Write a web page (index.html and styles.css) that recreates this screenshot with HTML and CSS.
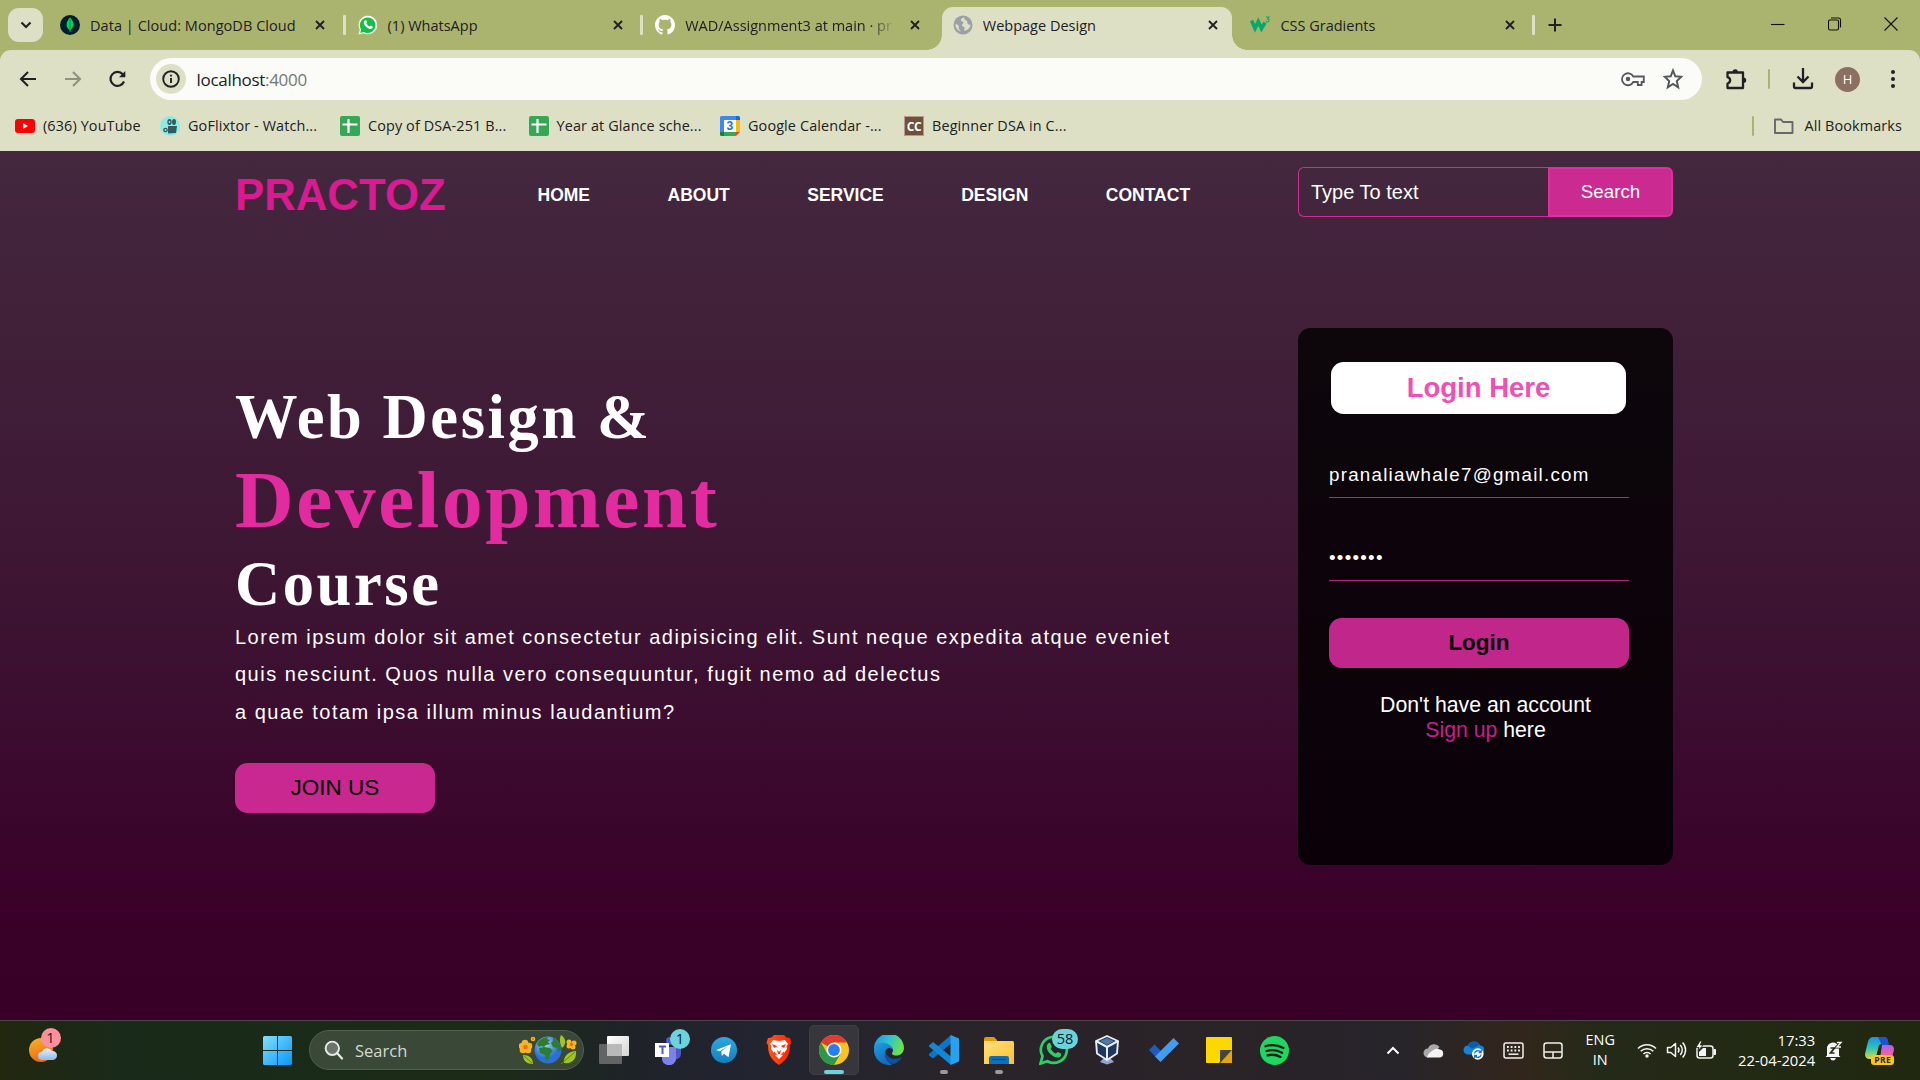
FILE: index.html
```html
<!DOCTYPE html>
<html lang="en">
<head>
<meta charset="utf-8">
<title>Webpage Design</title>
<link rel="stylesheet" href="styles.css">
</head>
<body>
<svg class="defs" width="0" height="0" aria-hidden="true">
  <defs>
    <symbol id="close" viewBox="0 0 10 10"><path d="M1 1l8 8M9 1l-8 8" stroke="#202124" stroke-width="1.9" fill="none"/></symbol>
    <symbol id="sheet" viewBox="0 0 20 20"><rect width="20" height="20" rx="2" fill="#34a853"/><path d="M8.5 3v14M2.5 8.5h15" stroke="#fff" stroke-width="2.2"/></symbol>
    <linearGradient id="winG" x1="0" y1="0" x2="1" y2="1"><stop offset="0" stop-color="#7fe0ff"/><stop offset="1" stop-color="#0a96f5"/></linearGradient>
    <linearGradient id="sunG" x1="0" y1="0" x2=".4" y2="1"><stop offset="0" stop-color="#f8b62c"/><stop offset="1" stop-color="#ee6a12"/></linearGradient>
    <linearGradient id="cloudG" x1="0" y1="0" x2="0" y2="1"><stop offset="0" stop-color="#e8f3ff"/><stop offset="1" stop-color="#8fb9ea"/></linearGradient>
    <linearGradient id="tgG" x1="0" y1="0" x2="0" y2="1"><stop offset="0" stop-color="#2fa8e2"/><stop offset="1" stop-color="#1180be"/></linearGradient>
    <linearGradient id="brG" x1="0" y1="0" x2="1" y2="0"><stop offset="0" stop-color="#ff5a1e"/><stop offset="1" stop-color="#ff1f00"/></linearGradient>
    <linearGradient id="edG" x1="0" y1="0" x2="1" y2=".3"><stop offset="0" stop-color="#1b8fd8"/><stop offset=".5" stop-color="#2bc0dc"/><stop offset="1" stop-color="#6be04e"/></linearGradient>
    <linearGradient id="edB" x1="0" y1="0" x2=".5" y2="1"><stop offset="0" stop-color="#1f9de6"/><stop offset="1" stop-color="#1668b8"/></linearGradient>
    <linearGradient id="foG" x1="0" y1="0" x2="1" y2="1"><stop offset="0" stop-color="#ffdf80"/><stop offset="1" stop-color="#ffc02c"/></linearGradient>
    <linearGradient id="cpA" x1="0" y1="0" x2="0" y2="1"><stop offset="0" stop-color="#1c8fe8"/><stop offset=".5" stop-color="#2fc5b4"/><stop offset="1" stop-color="#e7d43a"/></linearGradient>
    <linearGradient id="cpB" x1="0" y1="0" x2="0" y2="1"><stop offset="0" stop-color="#b25cf0"/><stop offset=".5" stop-color="#f2619c"/><stop offset="1" stop-color="#fb8a3c"/></linearGradient>
    <linearGradient id="tvG" x1="0" y1="0" x2="1" y2="1"><stop offset="0" stop-color="#fff"/><stop offset="1" stop-color="#d4d4d4"/></linearGradient>
    <radialGradient id="earthG" cx=".4" cy=".3"><stop offset="0" stop-color="#9fd6ff"/><stop offset="1" stop-color="#2b6fd8"/></radialGradient>
  </defs>
</svg>

<header class="tabstrip">
  <button class="tab-search"><svg width="12" height="8" viewBox="0 0 12 8"><path d="M1.5 1.5L6 6l4.500-4.500" fill="none" stroke="#202124" stroke-width="2.100"/></svg></button>
  <div class="tab">
    <svg class="fav" viewBox="0 0 20 20"><circle cx="10" cy="10" r="10" fill="#001e2b"/><path d="M10 2.500c2.800 3 3.600 5.200 3.400 7.600-.2 2.400-1.500 3.700-2.900 5L10 17.500l-.5-2.400c-1.500-1.200-2.800-2.700-2.900-5-.1-2.500.8-4.700 3.400-7.600z" fill="#00d65b"/><path d="M10 4v13" stroke="#00894a" stroke-width=".8"/></svg>
    <span class="tab-title t1">Data | Cloud: MongoDB Cloud</span>
    <svg class="x"><use href="#close"/></svg>
  </div>
  <div class="tab sep">
    <svg class="fav" viewBox="0 0 20 20"><path d="M.5 19.500L1.800 14.600A9.300 9.300 0 1 1 5.500 18.200z" fill="#fff"/><path d="M2.200 17.900l.9-3.400a7.800 7.800 0 1 1 2.800 2.600z" fill="#12c143"/><path d="M7.200 5.300c.5-.3 1-.2 1.200.3l.7 1.500c.1.400-.7 1.100-.6 1.400.7 1.400 1.700 2.300 3 2.900.4.100 1-1 1.300-.9l1.700.8c.4.200.4 2-1 2.500-2.200.8-7.300-2.600-7.700-5.900-.1-1.200.6-2.200 1.400-2.600z" fill="#fff"/></svg>
    <span class="tab-title">(1) WhatsApp</span>
    <svg class="x"><use href="#close"/></svg>
  </div>
  <div class="tab sep">
    <svg class="fav" viewBox="0 0 16 16"><path fill="#fff" d="M8 0C3.580 0 0 3.580 0 8c0 3.540 2.290 6.530 5.470 7.590.4.070.55-.17.55-.38 0-.19-.01-.82-.01-1.490-2.010.37-2.530-.49-2.690-.94-.09-.23-.48-.94-.82-1.130-.28-.15-.68-.52-.01-.53.630-.01 1.080.58 1.230.82.72 1.210 1.870.87 2.330.66.070-.52.280-.87.510-1.070-1.780-.2-3.640-.89-3.640-3.950 0-.87.310-1.590.82-2.150-.08-.2-.36-1.020.08-2.120 0 0 .67-.21 2.200.82.640-.18 1.320-.27 2-.27s1.360.09 2 .27c1.530-1.040 2.200-.82 2.200-.82.440 1.100.160 1.920.08 2.120.51.560.82 1.270.82 2.150 0 3.070-1.870 3.750-3.650 3.950.290.250.540.730.540 1.480 0 1.070-.01 1.930-.01 2.200 0 .21.150.46.550.38A8.010 8.010 0 0 0 16 8c0-4.420-3.580-8-8-8z"/></svg>
    <span class="tab-title t3">WAD/Assignment3 at main · pr</span>
    <svg class="x"><use href="#close"/></svg>
  </div>
  <div class="tab active">
    <svg class="fav globe" viewBox="0 0 20 20"><circle cx="10" cy="10" r="9.500" fill="#9aa0a6"/><path d="M10.500 2.500c-2 .8-3 2.200-2.500 3.300.5 1 2.300.6 2.500 1.800.2 1.100-1.600 1.300-1.500 2.700.1 1.300 2 1 2.600 2.200.4 1-.7 1.700-.4 3.300 3.500-.5 6.300-3 6.300-6.300-1.200.3-2.400.1-3-.8-.6-1 .3-1.900-.4-2.800-.7-.8-2.200-.5-2.500-1.600-.2-.7.300-1.500-1.100-1.800zM2.500 9c1.500.3 3 1 3.300 2.300.2 1-.6 1.700.1 2.800.5.800 1.400.8 1.700 2.300C4.500 15.500 2.200 12.500 2.500 9z" fill="#dde0c5"/></svg>
    <span class="tab-title">Webpage Design</span>
    <svg class="x"><use href="#close"/></svg>
  </div>
  <div class="tab">
    <svg class="fav w3" viewBox="0 0 20 20"><path d="M1.500 5.500L5 13.500 8.300 6.500l3.200 7L15 7.500" fill="none" stroke="#04aa6d" stroke-width="3.600"/><path d="M16 2h3l-1.500 2c2 0 2 3-.2 3-.7 0-1.200-.3-1.500-.8" fill="none" stroke="#04aa6d" stroke-width="1.100"/></svg>
    <span class="tab-title">CSS Gradients</span>
    <svg class="x"><use href="#close"/></svg>
  </div>
  <div class="new-tab"><svg width="14" height="14" viewBox="0 0 14 14"><path d="M7 .5v13M.5 7h13" stroke="#202124" stroke-width="2"/></svg></div>
  <div class="window-controls">
    <svg width="14" height="14" viewBox="0 0 14 14"><path d="M0 7.500h13.500" stroke="#111" stroke-width="1.100"/></svg>
    <svg width="14" height="14" viewBox="0 0 14 14"><rect x=".5" y="3" width="10" height="10" rx="1.500" fill="none" stroke="#111" stroke-width="1.100"/><path d="M3 1h7.500a2 2 0 0 1 2 2v7.500" fill="none" stroke="#111" stroke-width="1.100"/></svg>
    <svg width="14" height="14" viewBox="0 0 14 14"><path d="M.5 .5l13 13M13.500 .5l-13 13" stroke="#111" stroke-width="1.100"/></svg>
  </div>
</header>

<div class="chrome">
  <div class="toolbar">
    <svg class="tool" viewBox="0 0 20 20"><path d="M18 10H3.500M10 3L3 10l7 7" fill="none" stroke="#202124" stroke-width="2.100"/></svg>
    <svg class="tool" viewBox="0 0 20 20"><path d="M2 10h14.500M10 3l7 7-7 7" fill="none" stroke="#8f927f" stroke-width="2.100"/></svg>
    <svg class="tool" viewBox="0 0 20 20"><path d="M17 12.500A7 7 0 1 1 15.800 5.300L17.500 7.300" fill="none" stroke="#202124" stroke-width="2.200"/><path d="M18.300 2v6.300h-6.300z" fill="#202124"/></svg>
    <div class="omnibox">
      <span class="info"><svg width="20" height="20" viewBox="0 0 20 20"><circle cx="10" cy="10" r="7.800" fill="none" stroke="#202124" stroke-width="1.900"/><path d="M10 9v5M10 5.700v1.900" stroke="#202124" stroke-width="1.900"/></svg></span>
      <span class="url">localhost<span class="port">:4000</span></span>
      <svg class="key" width="24" height="16" viewBox="0 0 24 16"><path d="M12.300 5.500h10.500v5.500h-2.200v3h-3.800v-3h-4.500A6 6 0 1 1 12.300 5.500z" fill="none" stroke="#55585a" stroke-width="1.800"/><circle cx="7" cy="8" r="2.200" fill="#55585a"/></svg>
      <svg class="star" width="20" height="22" viewBox="0 0 20 22"><path d="M10 2.500l2.300 5.800 6 .5-4.500 4.300 1.400 6.300L10 16l-5.200 3.400 1.400-6.300L1.700 8.800l6-.5z" fill="none" stroke="#55585a" stroke-width="2"/></svg>
    </div>
    <svg class="puzzle" width="22" height="22" viewBox="0 0 22 22"><path d="M2.500 4.500h15.500v15.500H2.500v-4.500c3.500-.8 3.500-5.500 0-6.300z" fill="none" stroke="#202124" stroke-width="2.300" stroke-linejoin="round"/><path d="M7.500 4a2.700 2.700 0 0 1 5.400 0zM18.500 9.500a2.700 2.700 0 0 1 0 5.400z" fill="#202124"/></svg>
    <i class="vsep"></i>
    <svg class="dl" width="22" height="22" viewBox="0 0 22 22"><path d="M11 0v13.500M5.500 8.500l5.500 5.500 5.500-5.500M2 14.500v4q0 1.500 1.500 1.500h15q1.500 0 1.500-1.500v-4" fill="none" stroke="#202124" stroke-width="2.300"/></svg>
    <span class="avatar">H</span>
    <svg class="dots" width="6" height="20" viewBox="0 0 6 20"><g fill="#202124"><circle cx="3" cy="3" r="2"/><circle cx="3" cy="10" r="2"/><circle cx="3" cy="17" r="2"/></g></svg>
  </div>
  <div class="bookmarks">
    <div class="bm b1"><svg viewBox="0 0 20 20"><rect y="3" width="20" height="14" rx="3" fill="#f00"/><path d="M8 7v6l5-3z" fill="#fff"/></svg><span>(636) YouTube</span></div>
    <div class="bm b2"><svg viewBox="0 0 20 20"><circle cx="10" cy="10" r="10" fill="#93e8e2"/><g fill="#2e5d5e"><ellipse cx="9.500" cy="6" rx="2.200" ry="3"/><ellipse cx="14" cy="6" rx="2" ry="3"/><path d="M8 10h9l-1 7-8 .5z"/><circle cx="5.500" cy="14" r="2.300"/></g><circle cx="9.500" cy="6" r=".9" fill="#93e8e2"/><circle cx="5.500" cy="14" r="1" fill="#93e8e2"/></svg><span>GoFlixtor - Watch...</span></div>
    <div class="bm b3"><svg><use href="#sheet"/></svg><span>Copy of DSA-251 B...</span></div>
    <div class="bm b4"><svg><use href="#sheet"/></svg><span>Year at Glance sche...</span></div>
    <div class="bm b5"><svg viewBox="0 0 20 20"><path d="M0 1.500Q0 0 1.500 0H16v4H4v12H0z" fill="#4285f4"/><path d="M16 0h2.500Q20 0 20 1.500V4h-4z" fill="#1967d2"/><path d="M16 4h4v12h-4z" fill="#fbbc04"/><path d="M4 16h12v4H4z" fill="#34a853"/><path d="M0 16h4v4H1.500Q0 20 0 18.500z" fill="#188038"/><path d="M16 16h4l-4 4z" fill="#ea4335"/><path d="M4 4h12v12H4z" fill="#fff"/><text x="10" y="14.200" text-anchor="middle" class="cal">3</text></svg><span>Google Calendar -...</span></div>
    <div class="bm b6"><svg viewBox="0 0 20 20"><rect width="20" height="20" fill="#6f513d"/><rect x=".5" y=".5" width="19" height="19" fill="none" stroke="#b99a86"/><text x="10" y="14.500" text-anchor="middle" class="cc">CC</text></svg><span>Beginner DSA in C...</span></div>
    <i class="vsep push"></i>
    <div class="bm all"><svg class="folder" width="22" height="18" viewBox="0 0 22 18"><path d="M2 2.500h6l2 2.500h9.500v11H2z" fill="none" stroke="#66696b" stroke-width="1.900" stroke-linejoin="round"/></svg><span>All Bookmarks</span></div>
  </div>
</div>

<main class="page">
  <nav class="navbar">
    <h2 class="logo">PRACTOZ</h2>
    <ul class="menu"><li>HOME</li><li>ABOUT</li><li>SERVICE</li><li>DESIGN</li><li>CONTACT</li></ul>
    <div class="search"><span class="field">Type To text</span><button>Search</button></div>
  </nav>
  <div class="content">
    <section class="intro">
      <h1><span class="l1">Web Design &amp;</span><span class="l2">Development</span><span class="l3">Course</span></h1>
      <p>Lorem ipsum dolor sit amet consectetur adipisicing elit. Sunt neque expedita atque eveniet<br>quis nesciunt. Quos nulla vero consequuntur, fugit nemo ad delectus<br>a quae totam ipsa illum minus laudantium?</p>
      <button class="join">JOIN US</button>
    </section>
    <section class="form">
      <h2>Login Here</h2>
      <div class="input email">pranaliawhale7@gmail.com</div>
      <div class="input password">•••••••</div>
      <button class="login">Login</button>
      <p>Don't have an account<br><a>Sign up</a> here</p>
    </section>
  </div>
</main>

<footer class="taskbar">
  <div class="weather">
    <svg width="30" height="32" viewBox="0 0 30 32"><circle cx="13" cy="16" r="12" fill="url(#sunG)"/><path d="M14 26a4 4 0 0 1 0-8 5.500 5.500 0 0 1 10-1 4.500 4.500 0 0 1 1 9z" fill="url(#cloudG)"/></svg>
    <span class="badge pink">1</span>
  </div>
  <svg class="start" width="29" height="29" viewBox="0 0 29 29"><path d="M0 1.500Q0 0 1.500 0H14v14H0zM15 0h12.500Q29 0 29 1.500V14H15zM0 15h14v14H1.500Q0 29 0 27.500zM15 15h14v12.500q0 1.500-1.500 1.500H15z" fill="url(#winG)"/></svg>
  <div class="tb-search">
    <svg width="20" height="20" viewBox="0 0 20 20"><circle cx="8.300" cy="8.300" r="6.700" fill="#6b746b" stroke="#e6eae6" stroke-width="1.900"/><path d="M13 13l5 5.500" stroke="#e6eae6" stroke-width="2.200" stroke-linecap="round"/></svg>
    <span>Search</span>
    <svg class="earth" width="58" height="30" viewBox="0 0 58 30">
      <g fill="#f7b51e"><circle cx="6" cy="8" r="3.300"/><circle cx="10" cy="11" r="3.300"/><circle cx="9" cy="15" r="3.300"/><circle cx="4" cy="15" r="3.300"/><circle cx="3" cy="11" r="3.300"/><circle cx="14" cy="4" r="2.300"/><circle cx="50" cy="7" r="2.500"/><circle cx="55" cy="8" r="2.500"/><circle cx="54" cy="12" r="2.500"/><circle cx="50" cy="11" r="2.500"/></g>
      <circle cx="6.500" cy="12" r="2.300" fill="#f06a1c"/><circle cx="52.500" cy="9.500" r="1.700" fill="#f06a1c"/><circle cx="14" cy="4" r="1" fill="#f06a1c"/>
      <path d="M4 20c6 0 10 3 10 9-6 0-10-3-10-9zM42 0c5 3 6 9 1 13-2-4-3-9-1-13zM57 16c1 8-4 13-12 12-1-7 5-12 12-12z" fill="#a3c51c"/><path d="M5 21l8 7M56 17L42 29" stroke="#5d8a12"/>
      <circle cx="29" cy="15" r="13.500" fill="url(#earthG)"/>
      <path d="M18 9c2-4 6-7 11-7l-1 2 3 1-2 2 2 2-4 1-2 2-3-1-2 1zM20 13l5-1 6 1 3 3-3 3-1 5-3 2-1-6-5-2zM34 3c4 2 7 6 8 11l-3 3-1-4-4-1-2-4 2-2z" fill="#2d7d2b"/>
    </svg>
  </div>
  <div class="apps">
    <div class="app"><svg width="30" height="28" viewBox="0 0 30 28"><rect x="8" width="22" height="20" rx="1" fill="url(#tvG)"/><rect y="8" width="23" height="20" rx="1" fill="#777" fill-opacity=".78"/><path d="M8 8h15v12H8z" fill="#b9b9b9"/></svg></div>
    <div class="app"><svg width="30" height="30" viewBox="0 0 30 30"><circle cx="16" cy="6" r="4" fill="#5059c9"/><path d="M19 12h8v7a5 5 0 0 1-8 4z" fill="#4f57c6"/><path d="M8 12h14v9a7 7 0 0 1-14 4z" fill="#7b83eb"/><rect x="1" y="8" width="14" height="14" fill="#fff"/><path d="M5 11.500h7M8.500 11.500V19" stroke="#5059c9" stroke-width="2"/></svg><span class="badge">1</span></div>
    <div class="app"><svg width="26" height="26" viewBox="0 0 26 26"><circle cx="13" cy="13" r="13" fill="url(#tgG)"/><path d="M5 13L20 7.200l-2.500 13-4.500-3.500-2.200 2.200-.5-4.400 6-5-7.500 4.700z" fill="#fff"/></svg></div>
    <div class="app"><svg width="26" height="30" viewBox="0 0 26 30"><path d="M8 0h10l2.500 2.500L24 3l1.500 5-1.500 2c0 8-2 14-11 20C4 24 2 18 2 10L.5 8 2 3l3.500-.5z" fill="url(#brG)"/><path d="M7 5l6 1 6-1 3 4-1.500 2 .5 3-3 4-5 2-5-2-3-4 .5-3L4 9z" fill="#fff"/><path d="M6 9l4 1.500 1 1-3 1.500zM20 9l-4 1.500-1 1 3 1.500zM11 15l2 1.500 2-1.500-1 4h-2zM8 16.500l3 2.500-3-.5zM18 16.500L15 19l3-.5z" fill="#ff3a10"/><path d="M9 20l4-1 4 1-4 4z" fill="#fff"/></svg></div>
    <div class="app on"><svg width="30" height="30" viewBox="0 0 30 30"><circle cx="15" cy="15" r="15" fill="#fcc31e"/><path d="M15 15L2 7.500A15 15 0 0 1 28 7.500H15z" fill="#e33b2e"/><path d="M2 7.500A15 15 0 0 0 15 30l6.500-11.300L15 15 8.500 18.700z" fill="#2a9a47"/><circle cx="15" cy="15" r="7.500" fill="#fff"/><circle cx="15" cy="15" r="5.900" fill="#2b7cf0"/></svg><i class="mark wide"></i></div>
    <div class="app"><svg width="30" height="30" viewBox="0 0 30 30"><path d="M0 14A15 15 0 0 1 30 13c0 5-4 7.500-7.500 7.500-3 0-5-1-4.500-2.500 2-2 1-5.500-2-6.500C11 9 4 9 0 14z" fill="url(#edG)"/><path d="M0 14C1 8 8 6.500 14 9c4 2 5 4 4.800 6.500C18 12 13 12 11.500 16c-1.500 5 1 10 6.500 13.700A15 15 0 0 1 0 14z" fill="url(#edB)"/><path d="M11.500 16C9 22 14 29 20 29c4-1.500 6.500-4 8-7-9 4.500-16 0-16.500-6z" fill="#0f4f9c"/></svg></div>
    <div class="app"><svg width="30" height="30" viewBox="0 0 30 30"><path d="M22 0v8.500L4 23.500 0 20.500v-1.500z" fill="#0a76c4"/><path d="M0 10.500L4 7l18 14.500V30L0 11.500z" fill="#1287d4"/><path d="M21.500 0L30 3.500v23L21.500 30z" fill="#25a3f0"/></svg><i class="mark"></i></div>
    <div class="app"><svg width="30" height="27" viewBox="0 0 30 27"><path d="M0 2q0-2 2-2h8l3 3v3H0z" fill="#e09a07"/><path d="M0 4h28.500Q30 4 30 5.500V27H0z" fill="url(#foG)"/><path d="M5 27v-6q0-2 2-2h16q2 0 2 2v6z" fill="#0f70bd"/><path d="M8 22.500h14" stroke="#0a4c86" stroke-width="1.300"/></svg><i class="mark"></i></div>
    <div class="app"><svg width="30" height="30" viewBox="0 0 30 30"><path d="M1.500 28.500l2-7.300a13 13 0 1 1 5 5z" fill="none" stroke="#25d366" stroke-width="2.700"/><path d="M9 8.500c1-1 2-.7 2.400.1l1.300 2.800c.2.900-1 1.800-1 2.300 1 2.300 3 4 5 4.800.8.100 1.500-1.600 2.200-1.500l3 1.400c.7.600-.2 3.400-1.800 3.900C16 23.800 8 18 7.700 12c0-1.500.6-2.800 1.300-3.500z" fill="#25d366"/></svg><span class="badge pill">58</span></div>
    <div class="app vbox"><svg width="26" height="30" viewBox="0 0 26 30"><path d="M9 24h8l3 3-7 2.500L6 27z" fill="#8fa6cf"/><path d="M13 1l11 5-1 12.500L13 25 3 18.500 2 6z" fill="#1d3760" stroke="#e9eef7" stroke-width="1.900" stroke-linejoin="round"/><path d="M2 6l11 6 11-6M13 12v13" stroke="#e9eef7" stroke-width="2" fill="none"/><path d="M13 3l7 3-7 4-7-4z" fill="#5277a5"/></svg></div>
    <div class="app"><svg width="30" height="24" viewBox="0 0 30 24"><path d="M0 12l5.500-5.500L17 18l-5.500 6z" fill="#1c5bc0"/><path d="M24.500 0L30 5.500 11.500 24 6 18.500z" fill="#3f9cf0"/></svg></div>
    <div class="app"><svg width="26" height="26" viewBox="0 0 26 26"><path d="M0 1q0-1 1-1h24q1 0 1 1v12L13 26H1q-1 0-1-1z" fill="#fdd700"/><path d="M14 13h12L14 26z" fill="#444"/><path d="M26 13v13H14z" fill="#e8a50a"/></svg></div>
    <div class="app"><svg width="29" height="29" viewBox="0 0 29 29"><circle cx="14.500" cy="14.500" r="14.500" fill="#1ed760"/><path d="M5.500 10.200c6-1.800 13-1 18 1.800M6.500 15c5-1.500 11-.8 15.500 1.700M7.500 19.400c4.500-1.200 9-.6 13 1.500" fill="none" stroke="#111c14" stroke-width="2.300" stroke-linecap="round"/></svg></div>
  </div>
  <div class="tray">
    <svg width="14" height="9" viewBox="0 0 14 9"><path d="M1.500 7.500L7 2l5.500 5.500" fill="none" stroke="#fff" stroke-width="2"/></svg>
    <svg width="21" height="15" viewBox="0 0 21 15"><path d="M5 14.500a4.500 4.500 0 0 1 0-9A6.500 6.500 0 0 1 16.500 4L12 9z" fill="#a8a8a8"/><path d="M4 14.500q0-4 8-8.500a6 6 0 0 1 5 .5 4.100 4.100 0 0 1 0 8z" fill="#f3f3f3"/></svg>
    <svg width="21" height="19" viewBox="0 0 21 19"><path d="M5 13.500a4.500 4.500 0 0 1 0-9A6.500 6.500 0 0 1 17 4.500a4.500 4.500 0 0 1 0 9z" fill="#1583dc"/><path d="M5 4.500A6.500 6.500 0 0 1 16.500 4L9 8z" fill="#0c5cab"/><circle cx="14.800" cy="13" r="5.800" fill="#fff"/><path d="M11.500 12.500a3.500 3.500 0 0 1 6.200-1.500M18.200 13.500a3.500 3.500 0 0 1-6.200 1.500M18.200 9v2.500h-2.500M11.500 17v-2.500h2.500" fill="none" stroke="#1a73c8" stroke-width="1.300"/></svg>
    <svg width="21" height="17" viewBox="0 0 21 17"><rect x="1" y="1" width="19" height="15" rx="2" fill="none" stroke="#f0f0f0" stroke-width="1.500"/><path d="M4 5h13M4 8.500h13" stroke="#f0f0f0" stroke-width="1.800" stroke-dasharray="1.800 1.900"/><path d="M5.500 12.200h10" stroke="#f0f0f0" stroke-width="1.500"/></svg>
    <svg width="20" height="17" viewBox="0 0 20 17"><rect x="1" y="1" width="18" height="15" rx="2.500" fill="none" stroke="#f0f0f0" stroke-width="1.500"/><path d="M1 10h18M10 10v6" stroke="#f0f0f0" stroke-width="1.500"/></svg>
    <div class="lang">ENG<br>IN</div>
    <svg width="20" height="16" viewBox="0 0 20 16"><g fill="none" stroke="#f4f4f4" stroke-width="1.600"><path d="M1 6.500a12.700 12.700 0 0 1 18 0M3.700 9.300a8.900 8.900 0 0 1 12.600 0M6.400 12a5.100 5.100 0 0 1 7.200 0"/></g><circle cx="10" cy="14" r="1.700" fill="#f4f4f4"/></svg>
    <svg width="21" height="18" viewBox="0 0 21 18"><g fill="none" stroke="#f4f4f4" stroke-width="1.500"><path d="M1.500 6.500h3.300L9.500 2.500v13l-4.700-4H1.500z" stroke-linejoin="round"/><path d="M12 6.500a4 4 0 0 1 0 5M14.300 4a7.500 7.500 0 0 1 0 10M16.600 1.500a11 11 0 0 1 0 15"/></g></svg>
    <svg width="21" height="19" viewBox="0 0 21 19"><rect x="1" y="5" width="16" height="12" rx="2.500" fill="none" stroke="#f4f4f4" stroke-width="1.500"/><path d="M18 8.500h1.500v5H18z" fill="#f4f4f4" stroke="#f4f4f4"/><path d="M3 15V11l4-4h3v8z" fill="#f4f4f4"/><path d="M4 0L0 6.500h3L2 10l5-6H4.300L6 0z" fill="#f4f4f4" stroke="#262a1c" stroke-width=".8"/></svg>
    <div class="clock">17:33<br>22-04-2024</div>
    <svg width="18" height="21" viewBox="0 0 18 21"><path d="M2 15.500V9a6 6 0 0 1 12-1v7.500l1.500 1.500H.5zM5 18h6q-1 2.500-3 2.500T5 18z" fill="#f4f4f4"/><path d="M12 2.500h4l-4 4.500h4" fill="none" stroke="#262c1b" stroke-width="3.200"/><path d="M5.500 8h4l-4 5h4" fill="none" stroke="#262c1b" stroke-width="1.700"/><path d="M12 2.500h4l-4 4.500h4" fill="none" stroke="#f4f4f4" stroke-width="1.400"/></svg>
    <div class="copilot">
      <svg width="29" height="26" viewBox="0 0 29 26"><path d="M8 0h11q3 0 3.500 3l1 4h-7q-2.500 0-3 3l-2.500 10q-.7 2-3 2H4q-4-.5-4-5L3 4.500Q4.500 0 8 0z" fill="url(#cpA)"/><path d="M13 0h6q3 0 3.500 3l1.300 5h-7z" fill="#1c52d8"/><path d="M17 8h8q4 0 4 5l-3 10q-1 3-4 3H11q3 0 4-4z" fill="url(#cpB)"/></svg>
      <span class="pre">PRE</span>
    </div>
  </div>
</footer>
</body>
</html>
```
FILE: styles.css
```css
* { box-sizing: border-box; margin: 0; padding: 0; }
body {
  width: 1920px; height: 1080px; overflow: hidden;
  display: flex; flex-direction: column;
  font-family: "Liberation Sans", Arial, sans-serif;
  background: #abb46f;
}
svg { display: block; flex: none; }
button { border: 0; font: inherit; }
.defs { position: absolute; }

/* Browser tab strip */
.tabstrip {
  height: 50px; flex: none; display: flex; align-items: flex-start; padding-left: 8px;
  font: 14.5px "Open Sans", "Noto Sans", sans-serif; color: #202124;
}
.tab-search {
  width: 35px; height: 34px; margin: 8px 3px 0 0; border-radius: 11px; background: #dde0c5;
  display: flex; align-items: center; justify-content: center;
}
.tab { width: 297.6px; height: 50px; padding-left: 14px; display: flex; align-items: center; position: relative; }
.fav { width: 20px; height: 20px; margin-right: 10px; }
.tab-title { width: 212px; overflow: hidden; white-space: nowrap; line-height: 24px; padding-top: 1px; }
.t1 { letter-spacing: .05px; }
.t3 { -webkit-mask-image: linear-gradient(90deg, #000 184px, transparent 210px); mask-image: linear-gradient(90deg, #000 184px, transparent 210px); }
.x { width: 10px; height: 10px; margin-left: 13px; }
.sep::before { content: ""; position: absolute; left: -1px; top: 15px; width: 3px; height: 20px; border-radius: 1px; background: #dde0c5; }
.active::before {
  content: ""; position: absolute; z-index: 0; left: 3.500px; top: 7px; width: 290px; height: 43px;
  border-radius: 11px 11px 0 0; background: #dde0c5;
}
.active::after {
  content: ""; position: absolute; left: -11.500px; top: 35px; width: 320px; height: 15px;
  background:
    radial-gradient(circle at 0 0, transparent 14.500px, #dde0c5 15px) left / 15px 15px no-repeat,
    radial-gradient(circle at 100% 0, transparent 14.500px, #dde0c5 15px) right / 15px 15px no-repeat;
}
.active > * { position: relative; z-index: 1; }
.new-tab { margin: 18px 0 0 14px; position: relative; }
.new-tab::before { content: ""; position: absolute; left: -16px; top: -3px; width: 3px; height: 20px; border-radius: 1px; background: #dde0c5; }
.window-controls { margin: 17px 22px 0 auto; display: flex; gap: 42.500px; }

/* Toolbar and bookmarks */
.chrome { height: 101px; flex: none; background: #dde0c5; border-radius: 11px 11px 0 0; font-family: "Open Sans", "Noto Sans", sans-serif; color: #202124; }
.toolbar { height: 58px; display: flex; align-items: center; padding-left: 18px; }
.tool { width: 20px; height: 20px; margin-right: 24.500px; }
.omnibox { width: 1552px; height: 42px; margin-left: -1.500px; border-radius: 21px; background: #fbfcf7; display: flex; align-items: center; padding: 0 19px 0 6px; }
.info { width: 30px; height: 30px; border-radius: 50%; background: #dde0c5; display: flex; align-items: center; justify-content: center; }
.url { margin-left: 10.500px; font-size: 17px; letter-spacing: -.3px; }
.port { color: #757872; }
.key { margin-left: auto; }
.star { margin-left: 18px; }
.puzzle { margin-left: 23px; }
.vsep { width: 2px; height: 20px; background: #abb46f; border-radius: 1px; }
.toolbar .vsep { margin-left: 21px; }
.dl { margin-left: 21.500px; }
.avatar { width: 25px; height: 25px; margin-left: 21.500px; border-radius: 50%; background: #8d6e63; color: #fff; font-size: 13px; line-height: 25px; text-align: center; }
.dots { margin-left: 30px; }
.bookmarks { height: 43px; display: flex; align-items: center; padding: 0 18px 8px 15px; font-size: 14.400px; letter-spacing: .13px; }
.bm { display: flex; align-items: center; white-space: nowrap; }
.bm svg { width: 20px; height: 20px; margin-right: 8px; }
.bm.all svg { width: 22px; height: 18px; margin-right: 9px; }
.b1 { width: 145px; } .b2 { width: 180px; } .b3 { width: 188.500px; } .b4 { width: 191.500px; } .b5 { width: 184px; }
.push { margin: 0 19px 0 auto; }
.cal { font: bold 12px "Liberation Sans", sans-serif; fill: #1a73e8; }
.cc { font: bold 12px "Open Sans", sans-serif; fill: #fff; letter-spacing: -.5px; }

/* Web page */
.page { height: 869px; flex: none; padding: 0 247px 0 235px; background: linear-gradient(#43283e 0%, #3d1533 50%, #3a0029 88%, #380026 100%); color: #fff; }
.navbar { height: 88px; display: flex; align-items: center; }
.logo { width: 302.500px; font-size: 43.750px; line-height: 50px; color: #d91a90; }
.menu { list-style: none; display: flex; gap: 77.500px; font-weight: bold; font-size: 17.500px; line-height: 20px; }
.search { width: 375px; height: 50px; margin: 0 0 6px auto; display: flex; font-size: 20px; }
.field { width: 250px; padding-left: 12px; line-height: 48px; border: 1px solid #d22d96; border-right: 0; border-radius: 6px 0 0 6px; }
.search button { width: 125px; border: 2px solid #e42ba1; border-radius: 0 6px 6px 0; background: #cb2a90; color: #fff; font-size: 18.750px; }
.content { display: flex; justify-content: space-between; align-items: flex-start; }
.intro { padding-top: 142px; }
h1 { font: bold 62.500px "Liberation Serif", "Times New Roman", serif; letter-spacing: 2.600px; }
h1 span { display: block; }
.l1 { line-height: 72px; }
.l2 { font-size: 81.250px; line-height: 95px; color: #e32ba0; }
.l3 { line-height: 72.500px; margin-bottom: -2px; }
.intro p { font-size: 20px; line-height: 37.500px; letter-spacing: 1.500px; white-space: nowrap; }
.join { width: 200px; height: 50px; margin-top: 32px; border-radius: 12.500px; background: #c8288f; color: #000; font-size: 22.500px; line-height: 48px; display: block; }
.form { width: 375px; height: 537px; margin-top: 89px; padding: 34px 31px 0; border-radius: 12.500px; background: rgba(0, 0, 0, .8); }
.form h2 { width: 295px; height: 52px; margin-left: 2px; border-radius: 12.500px; background: #fff; color: #ef50b2; font-size: 27.500px; line-height: 51px; text-align: center; }
.input { width: 300px; border-bottom: 1px solid #b5247f; font-size: 18.750px; letter-spacing: 1.250px; }
.email { height: 44px; margin-top: 40px; line-height: 41px; }
.password { height: 44px; margin-top: 39px; line-height: 41px; }
.login { width: 300px; height: 50px; margin-top: 37px; border-radius: 12.500px; background: #c1268a; color: #0a0208; font-size: 22.500px; font-weight: bold; }
.form p { margin: 25px 0 0; font-size: 21.250px; line-height: 25px; text-align: center; }
.form a { color: #c81f8c; }

/* Taskbar */
.taskbar {
  height: 60px; flex: none; display: flex; align-items: center; border-top: 1px solid #484848; padding-bottom: 1px;
  background: linear-gradient(90deg, #22270f 0, #1a2a1a 120px, #1b2b17 480px, #1f2329 640px, #21242f 740px, #29242a 960px, #2a2328 1240px, #27242b 1400px, #32261b 1520px, #242a18 1600px, #20280f 1920px);
  font-family: "Open Sans", "Noto Sans", sans-serif; color: #fff;
}
.weather { width: 263px; padding-left: 28px; position: relative; }
.badge { position: absolute; width: 20px; height: 20px; border-radius: 10px; background: #6bd3da; color: #10202a; font-size: 14.500px; line-height: 20px; text-align: center; }
.badge.pink { left: 40.500px; top: -6px; background: #ff8f9c; }
.tb-search { width: 275px; height: 40px; margin: 0 2.500px 0 17px; padding: 0 6px 0 13.500px; border-radius: 20px; border: 1px solid #535f4f; background: #3a4838; display: flex; align-items: center; font-size: 16.500px; color: #d4d9d3; }
.tb-search span { margin-left: 11.500px; }
.earth { margin-left: auto; }
.apps { display: flex; }
.app { width: 55px; height: 50px; display: flex; align-items: center; justify-content: center; position: relative; }
.vbox { padding-right: 4px; }
.app .badge { left: 28.500px; top: 4px; }
.app .badge.pill { width: 26px; left: 25.500px; }
.app.on { width: 50px; margin: 0 2.500px; border-radius: 5px; background: #37363d; border: 1px solid #403f45; }
.mark { position: absolute; left: 50%; bottom: 1px; width: 8px; height: 4px; margin-left: -4px; border-radius: 2px; background: #9a999c; }
.mark.wide { width: 20px; margin-left: -10px; bottom: 0; background: #6bd3da; }
.tray { margin-left: 84.500px; display: flex; align-items: center; font-size: 14.800px; line-height: 20.500px; white-space: nowrap; }
.tray > svg { margin-right: 19.200px; }
.tray > svg:first-child { margin-right: 22.500px; }
.lang { width: 36px; margin: 0 19px 0 0; text-align: center; font-size: 14.400px; }
.lang + svg, .lang + svg + svg { margin-right: 9px; }
.lang + svg + svg + svg { margin-right: 0; }
.clock { width: 98px; text-align: right; margin-right: 10px; }
.clock + svg { margin-right: 22px !important; }
.copilot { position: relative; }
.pre { position: absolute; left: 6px; top: 18px; width: 23px; height: 10px; border-radius: 3px; background: #ffc61a; color: #222; font-size: 8.500px; font-weight: bold; line-height: 10px; text-align: center; letter-spacing: .4px; }
```
